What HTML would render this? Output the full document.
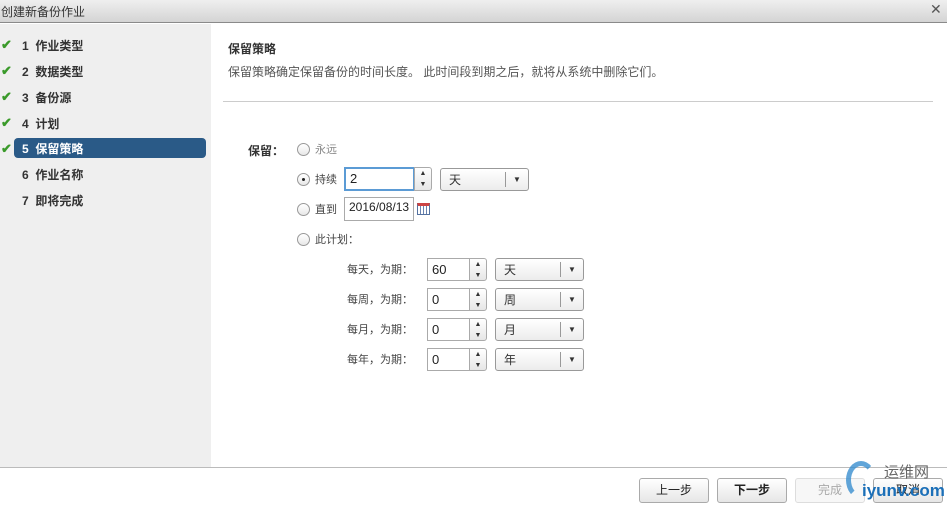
<!DOCTYPE html><html><head><meta charset="utf-8"><style>
*{margin:0;padding:0;box-sizing:border-box}
body{width:947px;height:508px;overflow:hidden;background:#fff;font-family:"Liberation Sans","Noto Sans CJK SC",sans-serif;font-size:12px;color:#333;position:relative;line-height:1.2}
.a{position:absolute}
.t{margin-top:2px}
.title{left:0;top:0;width:947px;height:23px;background:linear-gradient(#efefef,#d4d4d4);border-bottom:1px solid #8a8a8a}
.side{left:0;top:24px;width:211px;height:443px;background:#efefef}
.step{position:absolute;left:22px;font-weight:bold;font-size:12px;color:#333;margin-top:2px}
.chk{position:absolute;left:1px;color:#3a9a2a;font-weight:bold;font-size:13px;margin-top:1px}
.rad{position:absolute;width:13px;height:13px;border:1px solid #999;border-radius:50%;background:linear-gradient(#fff,#e8e8e8)}
.inp{position:absolute;border:1px solid #aaa;background:#fff;font-size:13px;padding:3px 4px;color:#222}
.spin{position:absolute;width:18px;border:1px solid #aaa;border-radius:0 3px 3px 0;background:linear-gradient(#fff,#e6e6e6);font-size:7px;text-align:center;line-height:11px;color:#333}
.dd{position:absolute;width:89px;height:23px;border:1px solid #999;border-radius:3px;background:linear-gradient(#fff,#ececec);font-size:12px;padding:4px 8px}
.dd:after{content:"▼";position:absolute;right:0;top:3px;width:22px;height:15px;border-left:1px solid #999;font-size:8px;text-align:center;line-height:15px}
.btn{position:absolute;top:478px;height:25px;border:1px solid #aaa;border-radius:3px;background:linear-gradient(#fff,#e6e6e6);font-size:12px;text-align:center;line-height:23px;color:#222}
.lbl{position:absolute;font-size:11px;color:#444;margin-top:2px}
</style></head><body>
<div class="a title"><span class="a" style="left:1px;top:5px;font-size:12px;color:#333">创建新备份作业</span><span class="a" style="left:930px;top:1px;font-size:14px;color:#555">✕</span></div>
<div class="a side">
<span class="chk" style="top:12px">✔</span><span class="step" style="top:13px">1&nbsp; 作业类型</span>
<span class="chk" style="top:38px">✔</span><span class="step" style="top:39px">2&nbsp; 数据类型</span>
<span class="chk" style="top:64px">✔</span><span class="step" style="top:65px">3&nbsp; 备份源</span>
<span class="chk" style="top:90px">✔</span><span class="step" style="top:91px">4&nbsp; 计划</span>
<div class="a" style="left:14px;top:114px;width:192px;height:20px;background:#2a5a87;border-radius:4px"></div>
<span class="chk" style="top:116px">✔</span><span class="step" style="top:116px;color:#fff">5&nbsp; 保留策略</span>
<span class="step" style="top:142px">6&nbsp; 作业名称</span>
<span class="step" style="top:168px">7&nbsp; 即将完成</span>
</div>
<div class="a t" style="left:228px;top:40px;font-weight:bold;font-size:12px">保留策略</div>
<div class="a t" style="left:228px;top:63px;font-size:12px;color:#555">保留策略确定保留备份的时间长度。 此时间段到期之后，就将从系统中删除它们。</div>
<div class="a" style="left:223px;top:101px;width:710px;height:1px;background:#ccc"></div>
<div class="a t" style="left:248px;top:142px;font-weight:bold">保留：</div>
<div class="rad" style="left:297px;top:143px"></div><span class="lbl" style="left:315px;top:142px;color:#888">永远</span>
<div class="rad" style="left:297px;top:173px"></div><div class="a" style="left:302px;top:178px;width:3px;height:3px;background:#222;border-radius:50%"></div><span class="lbl" style="left:315px;top:172px">持续</span>
<div class="inp" style="left:344px;top:167px;width:71px;height:24px;border:2px solid #5b9bd5;padding-top:2px">2</div>
<div class="spin" style="left:414px;top:167px;height:24px">▲<br>▼</div>
<div class="dd" style="left:440px;top:168px">天</div>
<div class="rad" style="left:297px;top:203px"></div><span class="lbl" style="left:315px;top:202px">直到</span>
<div class="inp" style="left:344px;top:197px;width:70px;height:24px;font-size:12px;padding-top:2px">2016/08/13</div>
<div class="a" style="left:417px;top:203px;width:13px;height:12px;border:1px solid #5572a0;background:repeating-linear-gradient(90deg,#fff 0 2px,#6b84b0 2px 3px),#fff;border-top:3px solid #c44"></div>
<div class="rad" style="left:297px;top:233px"></div><span class="lbl" style="left:315px;top:232px">此计划：</span>

<span class="lbl" style="left:347px;top:262px">每天，为期：</span><div class="inp" style="left:427px;top:258px;width:43px;height:23px">60</div><div class="spin" style="left:469px;top:258px;height:23px">▲<br>▼</div><div class="dd" style="left:495px;top:258px">天</div>
<span class="lbl" style="left:347px;top:292px">每周，为期：</span><div class="inp" style="left:427px;top:288px;width:43px;height:23px">0</div><div class="spin" style="left:469px;top:288px;height:23px">▲<br>▼</div><div class="dd" style="left:495px;top:288px">周</div>
<span class="lbl" style="left:347px;top:322px">每月，为期：</span><div class="inp" style="left:427px;top:318px;width:43px;height:23px">0</div><div class="spin" style="left:469px;top:318px;height:23px">▲<br>▼</div><div class="dd" style="left:495px;top:318px">月</div>
<span class="lbl" style="left:347px;top:352px">每年，为期：</span><div class="inp" style="left:427px;top:348px;width:43px;height:23px">0</div><div class="spin" style="left:469px;top:348px;height:23px">▲<br>▼</div><div class="dd" style="left:495px;top:348px">年</div>

<div class="a" style="left:0;top:467px;width:947px;height:1px;background:#bbb"></div>
<div class="btn" style="left:639px;width:70px">上一步</div>
<div class="btn" style="left:717px;width:70px;font-weight:bold">下一步</div>
<div class="btn" style="left:795px;width:70px;color:#aaa;border-color:#ddd;background:#f7f7f7">完成</div>
<div class="btn" style="left:873px;width:70px">取消</div>
<div class="a" style="left:846px;top:461px;width:30px;height:38px;border:5px solid #3a8fd0;border-right-color:transparent;border-bottom-color:transparent;border-radius:50%;opacity:.8"></div>
<span class="a" style="left:884px;top:464px;font-size:15px;color:#666">运维网</span>
<span class="a" style="left:862px;top:481px;font-size:17px;font-weight:bold;color:#1b6fb8">iyunv.com</span>
</body></html>
